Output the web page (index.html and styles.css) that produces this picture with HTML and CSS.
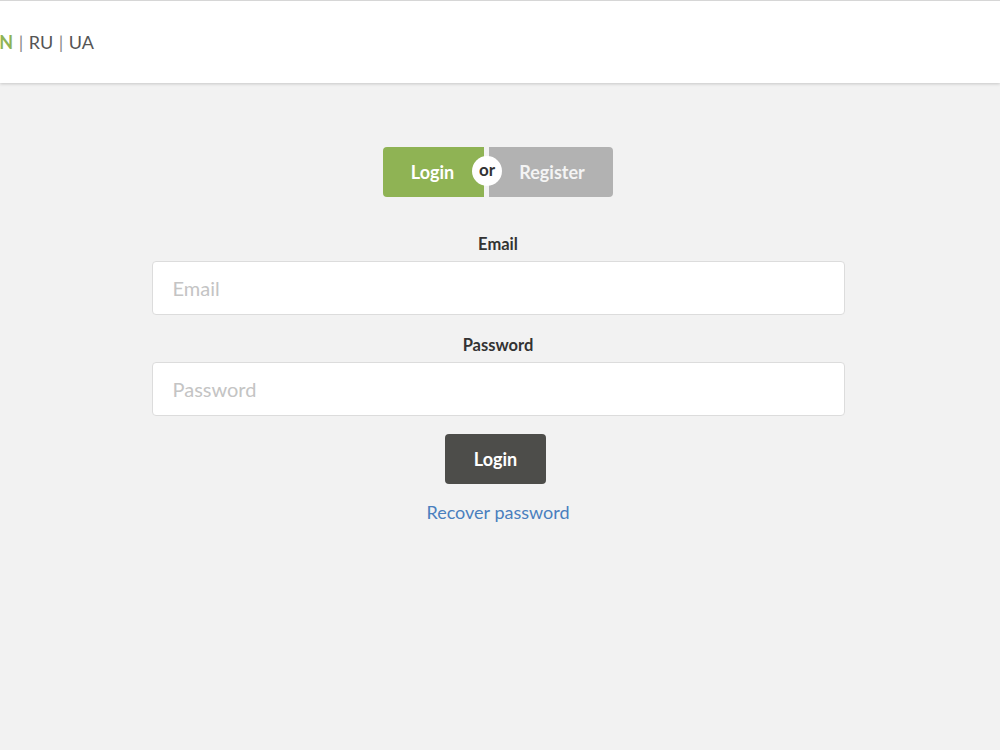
FILE: index.html
```html
<!DOCTYPE html>
<html lang="en">
<head>
    <meta charset="UTF-8">
    <meta name="viewport" content="width=device-width, initial-scale=1.0">
    <title>Login</title>
    <link rel="stylesheet" href="styles.css">
</head>
<body>
    <header class="header">
        <div class="lang">
            <a href="#" class="lang-link active">EN</a>
            <span class="sep">|</span>
            <a href="#" class="lang-link">RU</a>
            <span class="sep">|</span>
            <a href="#" class="lang-link">UA</a>
        </div>
    </header>

    <main class="auth">
        <!-- Login / Register switch -->
        <div class="switch">
            <a href="#" class="switch-btn switch-login">Login</a>
            <span class="switch-or">or</span>
            <a href="#" class="switch-btn switch-register">Register</a>
        </div>

        <form class="auth-form">
            <div class="input-group">
                <label for="email">Email</label>
                <input type="email" id="email" name="email" placeholder="Email">
            </div>
            <div class="input-group">
                <label for="password">Password</label>
                <input type="password" id="password" name="password" placeholder="Password">
            </div>
            <button type="button" class="button">Login</button>
            <a href="#" class="recover">Recover password</a>
        </form>
    </main>
</body>
</html>
```

FILE: styles.css
```css
body {
    font-family: Lato, "Open Sans", sans-serif;
    margin: 0;
    padding: 0;
    background-color: #f2f2f2;
    color: #333;
}
.header {
    height: 82px;
    background-color: #fff;
    border-top: 1px solid #d6d6d6;
    box-shadow: 0 1px 3px rgba(0,0,0,0.18);
    display: flex;
    align-items: center;
}
.lang {
    margin-left: -11px;
    font-size: 18px;
    color: #555;
    display: flex;
    gap: 5.5px;
}
.lang-link {
    color: #555;
    text-decoration: none;
}
.lang-link.active {
    color: #8fb354;
    font-weight: bold;
}
.sep {
    color: #888;
}
.auth {
    display: flex;
    flex-direction: column;
    align-items: center;
    padding-top: 64px;
    margin-left: -4px;
}
.switch {
    display: flex;
    align-items: center;
    position: relative;
    height: 50px;
}
.switch-btn {
    height: 50px;
    display: flex;
    align-items: center;
    color: #fff;
    font-size: 18px;
    font-weight: bold;
    text-decoration: none;
}
.switch-login {
    width: 101px;
    justify-content: center;
    background-color: #8fb354;
    border-radius: 4px 0 0 4px;
    padding-right: 2px;
    box-sizing: border-box;
}
.switch-register {
    width: 124px;
    margin-left: 5px;
    justify-content: center;
    background-color: #b2b2b2;
    border-radius: 0 4px 4px 0;
    padding-left: 2px;
    box-sizing: border-box;
    color: #f4f4f4;
}
.switch-or {
    position: absolute;
    left: 89px;
    top: 9px;
    width: 30px;
    height: 30px;
    border-radius: 50%;
    background-color: #fff;
    color: #333;
    font-size: 17px;
    font-weight: bold;
    display: flex;
    align-items: center;
    justify-content: center;
    line-height: 1;
    padding-bottom: 3px;
    box-sizing: border-box;
}
.auth-form {
    width: 693px;
    margin-top: 37px;
    display: flex;
    flex-direction: column;
    align-items: center;
}
.input-group {
    width: 100%;
    margin-bottom: 20px;
    text-align: center;
}
.input-group label {
    display: block;
    font-size: 16.5px;
    font-weight: bold;
    color: #333;
    margin-bottom: 7px;
}
.input-group input {
    width: 100%;
    height: 54px;
    box-sizing: border-box;
    padding: 0 20px;
    border: 1px solid #dcdcdc;
    border-radius: 4px;
    background-color: #fff;
    font-family: Lato, sans-serif;
    font-size: 20px;
    color: #333;
}
.input-group input::placeholder {
    color: #c4c4c4;
}
.button {
    width: 101px;
    height: 50px;
    margin-top: -2px;
    border: none;
    border-radius: 4px;
    background-color: #4d4d4a;
    color: #fff;
    font-family: Lato, sans-serif;
    font-size: 18px;
    font-weight: bold;
    cursor: pointer;
    margin-left: -5px;
}
.recover {
    margin-top: 17px;
    font-size: 18px;
    color: #4a7fbe;
    text-decoration: none;
}
```
